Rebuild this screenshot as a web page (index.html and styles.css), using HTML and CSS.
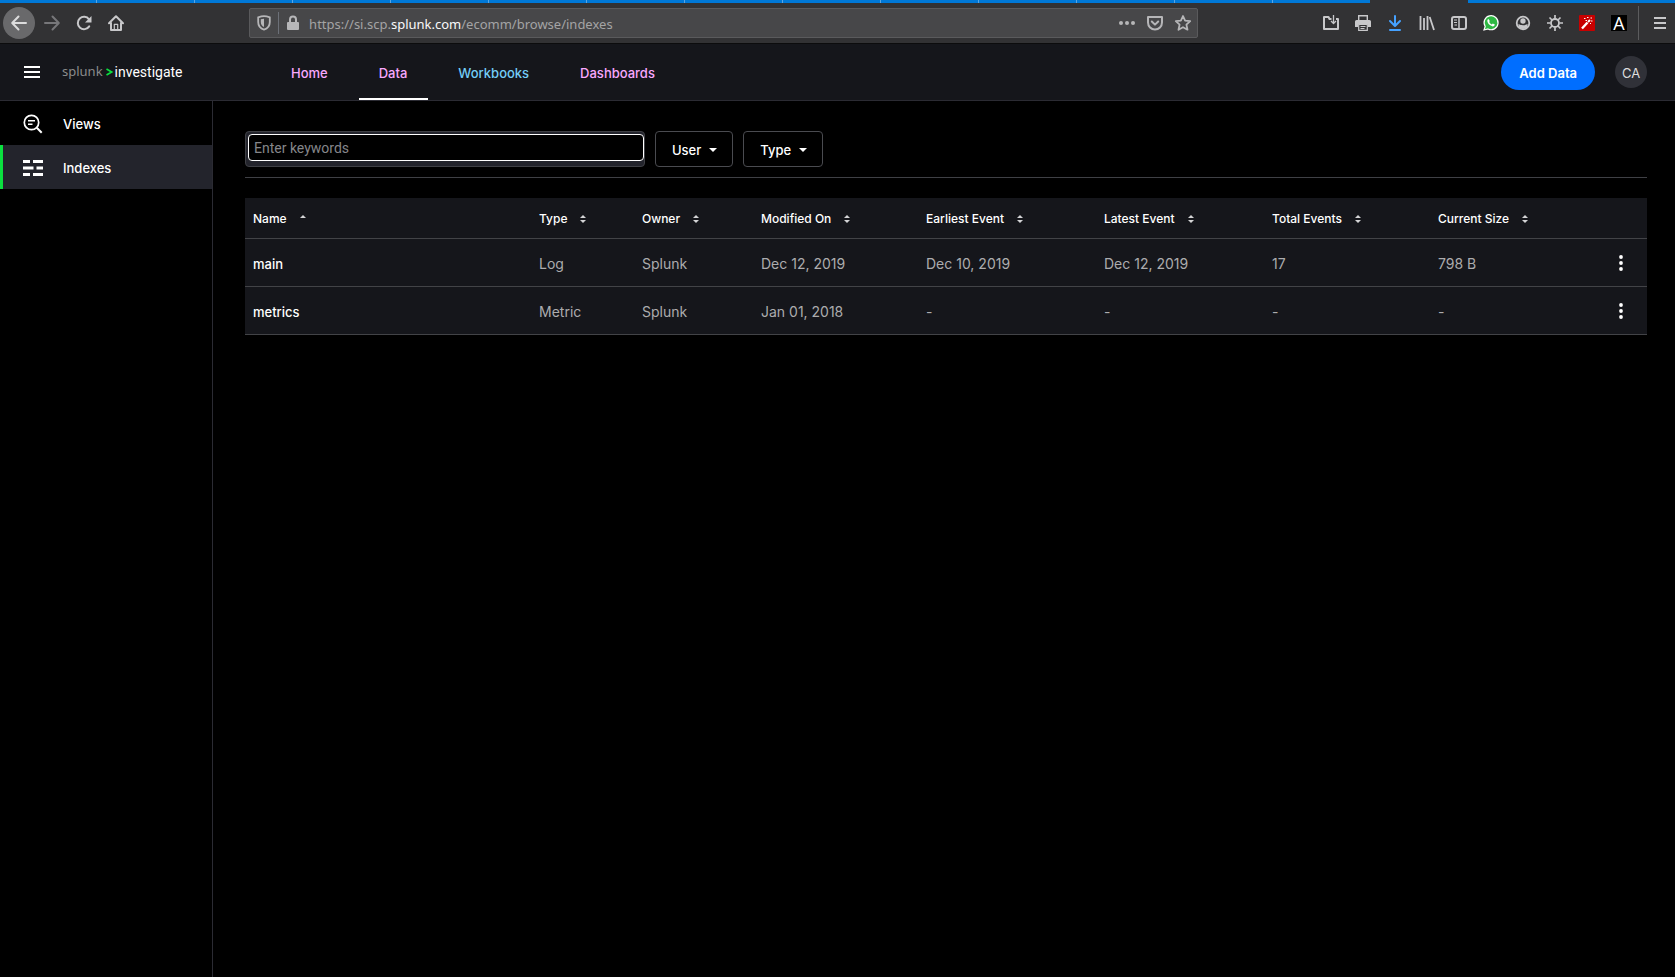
FILE: index.html
```
<!DOCTYPE html>
<html lang="en">
<head>
<meta charset="utf-8">
<title>Indexes</title>
<link rel="stylesheet" href="styles.css">
</head>
<body>
<div class="browser">
  <div class="tabstrip">
    <span class="tab first"></span><span class="tab"></span><span class="tab"></span><span class="tab"></span><span class="tab"></span><span class="tab"></span><span class="tab"></span><span class="tab"></span><span class="tab"></span><span class="tab"></span><span class="tab"></span><span class="tab"></span><span class="tab"></span><span class="tab last"></span><span class="tab active"></span><span class="rest"></span>
  </div>
  <div class="toolbar">
    <div class="tools">
      <button class="tool back" aria-label="Back"><svg width="16" height="16" viewBox="0 0 16 16" fill="none" stroke="currentColor" stroke-width="2" stroke-linecap="round" stroke-linejoin="round"><path d="M15 8H1.5M7.500 1.500L1.200 8l6.300 6.500"/></svg></button>
      <button class="tool dim" aria-label="Forward"><svg width="16" height="16" viewBox="0 0 16 16" fill="none" stroke="currentColor" stroke-width="2" stroke-linecap="round" stroke-linejoin="round"><path d="M1 8h13.500M8.500 1.500L14.800 8l-6.300 6.500"/></svg></button>
      <button class="tool" aria-label="Reload"><svg width="16" height="16" viewBox="0 0 16 16" fill="none" stroke="currentColor" stroke-width="2"><path d="M13.200 11.400A6.200 6.200 0 1 1 13 4.300" stroke-linecap="round"/><path d="M15.500 1v6.500H9z" fill="currentColor" stroke="none"/></svg></button>
      <button class="tool" aria-label="Home"><svg width="16" height="16" viewBox="0 0 16 16" fill="none" stroke="currentColor" stroke-width="2" stroke-linecap="round" stroke-linejoin="round"><path d="M1 8.300L8 1.300l7 7M3 8v7h10V8"/><path d="M6.300 14.500V9.300h3.400v5.200z" stroke-width="1.200"/></svg></button>
    </div>
    <span class="spacer"></span>
    <div class="urlbar">
      <svg class="shield" width="14" height="16" viewBox="0 0 14 16"><path d="M7 1.200c-2 0-4 .5-5.800 1.100V7c0 4 2.500 6.700 5.800 7.600 3.300-.9 5.800-3.600 5.800-7.600V2.300C11 1.700 9 1.200 7 1.200z" fill="none" stroke="currentColor" stroke-width="1.800"/><path d="M7 3.800c-1.200 0-2.200.2-3.200.5V7c0 2.400 1.200 4.100 3.200 5z" fill="currentColor"/></svg>
      <span class="url-rule"></span>
      <svg class="lock" width="12" height="16" viewBox="0 0 12 16"><rect y="7" width="12" height="8" rx="1" fill="currentColor"/><path d="M3 8V4.500a3 3 0 0 1 6 0V8" fill="none" stroke="currentColor" stroke-width="2"/></svg>
      <span class="url">https://si.scp.<span class="domain">splunk.com</span>/ecomm/browse/indexes</span>
      <span class="url-tools">
        <svg width="16" height="16" viewBox="0 0 16 16" fill="currentColor"><circle cx="2" cy="8" r="2"/><circle cx="8" cy="8" r="2"/><circle cx="14" cy="8" r="2"/></svg>
        <svg width="16" height="16" viewBox="0 0 16 16" fill="none" stroke="currentColor" stroke-width="2" stroke-linecap="round" stroke-linejoin="round"><path d="M1 2h14v5.500a7 7 0 0 1-14 0z"/><path d="M4.800 6.500L8 9.600l3.200-3.100"/></svg>
        <svg width="16" height="16" viewBox="0 0 16 16" fill="none" stroke="currentColor" stroke-width="1.800" stroke-linejoin="round"><path d="M8 1l2.100 4.700 5.100.5-3.800 3.400 1.100 5.100L8 12.200l-4.500 2.500 1.100-5.100L.8 6.200l5.100-.5z"/></svg>
      </span>
    </div>
    <span class="spacer"></span>
    <div class="tools">
      <button class="tool" aria-label="Save to folder"><svg width="16" height="16" viewBox="0 0 16 16" fill="none" stroke="currentColor" stroke-width="2" stroke-linejoin="round"><path d="M8.500 4H6.500L5.500 2H1v12h14V4h-2"/><path d="M10.500 0v8M8 6l2.500 2.500L13 6" stroke-width="1.300"/></svg></button>
      <button class="tool" aria-label="Print"><svg width="16" height="16" viewBox="0 0 16 16"><path d="M3.700 5V.7h8.600V5" fill="none" stroke="currentColor" stroke-width="1.400"/><path d="M1.500 5h13A1.500 1.500 0 0 1 16 6.500V12h-3V9.500H3V12H0V6.500A1.500 1.500 0 0 1 1.500 5z" fill="currentColor"/><path d="M3.700 9.500h8.600v5.800H3.700zM5.500 11.500h5M5.500 13.500h4" fill="none" stroke="currentColor" stroke-width="1.200"/></svg></button>
      <button class="tool blue" aria-label="Downloads"><svg width="16" height="16" viewBox="0 0 16 16" fill="none" stroke="currentColor" stroke-width="2" stroke-linecap="round" stroke-linejoin="round"><path d="M8 1v9.500M3 6l5 5 5-5M3 15h10"/></svg></button>
      <button class="tool" aria-label="Library"><svg width="16" height="16" viewBox="0 0 16 16" fill="none" stroke="currentColor" stroke-width="1.800"><path d="M1.500 1v14M5 3v12M8.500 1v14M10.700 2l4.300 13"/></svg></button>
      <button class="tool" aria-label="Sidebars"><svg width="16" height="16" viewBox="0 0 16 16" fill="none" stroke="currentColor"><rect x="1" y="2" width="14" height="12" rx="2" stroke-width="2"/><path d="M8 2v12" stroke-width="1.500"/><path d="M3 5h3M3 7.500h3M3.500 10H6"/></svg></button>
      <button class="tool" aria-label="Chat"><svg width="16" height="16" viewBox="0 0 16 16"><path d="M1 15l1.200-3.500A7 7 0 1 1 5 14z" fill="#2eb843" stroke="#fff" stroke-width="1.200"/><path d="M5.500 4l1.300 2-.6 1c.6 1.200 1.400 1.900 2.600 2.400l1-.9 2 1.100c0 1.200-1 1.800-2 1.800C7 11 4.300 8 4.300 5.800c0-.8.5-1.600 1.200-1.800z" fill="#fff"/></svg></button>
      <button class="tool" aria-label="Account"><svg width="16" height="16" viewBox="0 0 16 16"><circle cx="8" cy="8" r="6.300" fill="none" stroke="currentColor" stroke-width="1.800"/><circle cx="8" cy="6" r="2.700" fill="currentColor"/><path d="M3.500 9c1.500.8 2.800 1.200 4.500 1.200s3-.4 4.500-1.200c.5 3-1.500 5-4.500 5S3 12 3.500 9z" fill="currentColor"/></svg></button>
      <button class="tool" aria-label="Settings"><svg width="16" height="16" viewBox="0 0 16 16" fill="none" stroke="currentColor"><circle cx="8" cy="8" r="4" stroke-width="1.800"/><path d="M8 0v3.500M8 12.500V16M0 8h3.500M12.500 8H16M2.500 2.500L5 5M11 11l2.500 2.500M2.500 13.500L5 11M11 5l2.500-2.500" stroke-width="1.700"/></svg></button>
      <button class="tool" aria-label="Magic wand"><svg width="16" height="16" viewBox="0 0 16 16"><rect width="16" height="16" rx="1" fill="#c80000"/><path d="M3 13.500l5.500-6" stroke="#fff" stroke-width="2.400"/><path d="M9 7l2-2" stroke="#fff" stroke-width="2"/><path d="M5 3.500h1.500M8 2.500h1.500M11.500 3H13M12 6h1.500M11 8.500h1M6.500 5.500H8" stroke="#fff"/></svg></button>
      <button class="tool" aria-label="Font"><span class="letter">A</span></button>
    </div>
    <span class="tool-rule"></span>
    <button class="tool menu" aria-label="Open menu"><svg width="12" height="12" viewBox="0 0 12 12" stroke="currentColor" stroke-width="2"><path d="M0 1h12M0 6h12M0 11h12"/></svg></button>
  </div>
</div>

<header class="app-header">
  <button class="burger" aria-label="Menu"><svg width="16" height="12" viewBox="0 0 16 12" stroke="#fff" stroke-width="2"><path d="M0 1h16M0 6h16M0 11h16"/></svg></button>
  <a class="brand" href="#"><span class="brand-name">splunk</span><svg width="7" height="8" viewBox="0 0 7 8" fill="none" stroke="#0be03f" stroke-width="1.700"><path d="M.5 1L5.700 4 .5 7"/></svg><span class="product">investigate</span></a>
  <nav class="main-nav">
    <a href="#">Home</a>
    <a href="#" class="current">Data</a>
    <a href="#" class="fresh">Workbooks</a>
    <a href="#">Dashboards</a>
  </nav>
  <button class="add">Add Data</button>
  <button class="avatar">CA</button>
</header>

<div class="shell">
  <nav class="sidebar">
    <a href="#"><svg width="20" height="20" viewBox="0 0 20 20" fill="none" stroke="#fff"><circle cx="8.500" cy="8.500" r="7.200" stroke-width="1.700"/><path d="M13.800 13.800l4.900 4.900" stroke-width="2"/><path d="M5 6.700h7M5 10.300h4.500" stroke-width="1.500"/></svg>Views</a>
    <a href="#" class="selected"><svg width="20" height="16" viewBox="0 0 20 16" stroke="#fff" stroke-width="3"><path d="M0 1.500h7M10 1.500h10M0 8h10.500M13.500 8H20M0 14.500h7M10 14.500h10"/></svg>Indexes</a>
  </nav>
  <main class="content">
    <div class="filters">
      <div class="search"><input type="text" placeholder="Enter keywords" aria-label="Enter keywords"></div>
      <button class="filter">User<i class="caret"></i></button>
      <button class="filter">Type<i class="caret"></i></button>
    </div>
    <table class="indexes">
      <colgroup><col class="c-name"><col class="c-type"><col class="c-owner"><col class="c-modified"><col class="c-earliest"><col class="c-latest"><col class="c-total"><col class="c-size"><col class="c-menu"></colgroup>
      <thead>
        <tr>
          <th><button>Name<i class="sort asc"></i></button></th>
          <th><button>Type<i class="sort"></i></button></th>
          <th><button>Owner<i class="sort"></i></button></th>
          <th><button>Modified On<i class="sort"></i></button></th>
          <th><button>Earliest Event<i class="sort"></i></button></th>
          <th><button>Latest Event<i class="sort"></i></button></th>
          <th><button>Total Events<i class="sort"></i></button></th>
          <th><button>Current Size<i class="sort"></i></button></th>
          <th></th>
        </tr>
      </thead>
      <tbody>
        <tr>
          <td><a href="#">main</a></td><td>Log</td><td>Splunk</td><td>Dec 12, 2019</td><td>Dec 10, 2019</td><td>Dec 12, 2019</td><td>17</td><td>798 B</td>
          <td class="actions"><button class="kebab" aria-label="Actions for main"><svg width="4" height="16" viewBox="0 0 4 16" fill="#fff"><circle cx="2" cy="2" r="1.900"/><circle cx="2" cy="8" r="1.900"/><circle cx="2" cy="14" r="1.900"/></svg></button></td>
        </tr>
        <tr>
          <td><a href="#">metrics</a></td><td>Metric</td><td>Splunk</td><td>Jan 01, 2018</td><td>-</td><td>-</td><td>-</td><td>-</td>
          <td class="actions"><button class="kebab" aria-label="Actions for metrics"><svg width="4" height="16" viewBox="0 0 4 16" fill="#fff"><circle cx="2" cy="2" r="1.900"/><circle cx="2" cy="8" r="1.900"/><circle cx="2" cy="14" r="1.900"/></svg></button></td>
        </tr>
      </tbody>
    </table>
  </main>
</div>
</body>
</html>
```
FILE: styles.css
```
* { box-sizing: border-box; }
body {
  margin: 0;
  min-height: 100vh;
  display: flex;
  flex-direction: column;
  background: #000;
  color: #fff;
  font: 13px/20px Inter, Roboto, sans-serif;
}
button { margin: 0; padding: 0; border: 0; background: none; color: inherit; font: inherit; }
a { color: inherit; text-decoration: none; }
svg { display: block; flex: none; overflow: visible; }

/* Browser bar */
.browser { background: #323234; border-bottom: 1px solid #0c0c0d; }
.tabstrip { display: flex; height: 3px; }
.tab { width: 98px; background: #0078d7; border-right: 1px solid #5aa5e3; }
.tab.first { width: 97px; }
.tab.last { width: 97px; border-right: 0; }
.tab.active { background: #323234; border: 0; }
.rest { flex: 1; background: #0078d7; }
.toolbar { display: flex; align-items: center; height: 40px; padding-left: 3px; }
.tools { display: flex; }
.tool { display: flex; align-items: center; justify-content: center; width: 32px; height: 32px; color: #c8c8ca; }
.back { margin-right: 1px; border-radius: 50%; background: #69696b; color: #dcdcdd; }
.dim { color: #77777a; }
.blue { color: #45a1ff; }
.menu { width: 30px; }
.letter { width: 16px; height: 16px; background: #000; color: #fff; font: 18px/17px "Open Sans", sans-serif; }
.spacer { flex: 117; }
.urlbar {
  flex: 933;
  display: flex;
  align-items: center;
  height: 30px;
  padding: 0 6px 0 7px;
  border: 1px solid #5a5a5c;
  border-radius: 2px;
  background: #474749;
  color: #b6b6b8;
}
.url-rule { width: 1px; height: 22px; margin: 0 8px 0 7px; background: #6c7078; }
.url { flex: 1; margin-left: 10px; padding-top: 2px; color: #a4a4a5; font: 13px/20px "Noto Sans", sans-serif; }
.domain { color: #f9f9fa; }
.url-tools { display: flex; gap: 12px; }
.tool-rule { width: 1px; height: 34px; margin: 0 6px 0 3px; background: #5c5c5e; }

/* Application header */
.app-header {
  display: flex;
  align-items: center;
  height: 57px;
  padding: 0 28px 0 24px;
  background: #15161b;
  border-bottom: 1px solid #2b2b33;
}
.brand { display: flex; align-items: center; width: 209px; margin-left: 22px; }
.brand svg { margin: 0 2px 0 3px; }
.brand-name { color: #8b8b8b; font: 13px/20px "Noto Sans", sans-serif; padding-bottom: 2px; }
.product { padding-bottom: 1px; font: 14px/20px Roboto, sans-serif; }
.main-nav { display: flex; align-self: stretch; gap: 10px; flex: 1; }
.main-nav a { padding: 18px 21px 0 20px; color: #f9a8ff; line-height: 22px; font-weight: 500; }
.main-nav .fresh { color: #73cdf7; }
.main-nav .current { border-bottom: 2px solid #fff; }
.add { height: 36px; padding: 2px 18px 0; border-radius: 18px; background: #006eff; font-weight: 600; }
.avatar { width: 32px; height: 32px; margin-left: 20px; border-radius: 50%; background: #303138; color: #dedede; padding-top: 2px; }

/* Page */
.shell { display: flex; flex: 1; }
.sidebar { width: 213px; border-right: 1px solid #2b2b33; }
.sidebar a { display: flex; align-items: center; gap: 20px; height: 44px; padding: 2px 0 0 20px; border-left: 3px solid transparent; font-weight: 500; }
.sidebar .selected { border-left-color: #0be03f; background: #23242c; }
.content { flex: 1; padding: 30px 28px 0 32px; }
.filters { display: flex; gap: 10px; padding-bottom: 10px; border-bottom: 1px solid #3f4045; }
.search { width: 400px; height: 36px; padding: 2px 0 0 2px; border: 1px solid #3f4045; border-radius: 4px; background: #23242c; }
.search input { display: block; width: 100%; height: 27px; padding: 1px 5px 0; border: 1px solid #fff; border-radius: 4px; outline: 0; background: #000; color: #fff; font: 14px/20px Roboto, sans-serif; }
.search input::placeholder { color: #85868a; opacity: 1; }
.filter { display: flex; align-items: center; gap: 8px; height: 36px; padding: 2px 15px 0 16px; border: 1px solid #4a4b50; border-radius: 4px; font-weight: 500; }
.caret { border: 4px solid transparent; border-top-color: #fff; border-bottom: 0; }

.indexes { width: 100%; margin-top: 20px; table-layout: fixed; border-collapse: separate; border-spacing: 0; background: #15161b; }
.c-name { width: 286px; }
.c-type { width: 103px; }
.c-owner { width: 119px; }
.c-modified { width: 165px; }
.c-earliest { width: 178px; }
.c-latest { width: 168px; }
.c-total { width: 166px; }
.c-size { width: 166px; }
.c-menu { width: 51px; }
.indexes th, .indexes td { padding: 0 8px; border-bottom: 1px solid #424347; text-align: left; white-space: nowrap; }
.indexes th { height: 41px; padding-top: 2px; font-size: 12px; font-weight: 500; }
.indexes th button { display: flex; align-items: center; gap: 13px; }
.indexes td { height: 48px; padding-top: 3px; color: #acacae; font-size: 14px; }
.indexes td a { color: #fff; font-size: 13px; font-weight: 500; }
.indexes .actions { padding-top: 1px; }
.sort { display: flex; flex-direction: column; gap: 2px; }
.sort::before, .sort::after { content: ""; border: 3px solid transparent; }
.sort::before { border-top: 0; border-bottom-color: #d4d4d6; }
.sort::after { border-bottom: 0; border-top-color: #d4d4d6; }
.sort.asc::after { visibility: hidden; }
.kebab { display: flex; justify-content: center; width: 34px; }
```
